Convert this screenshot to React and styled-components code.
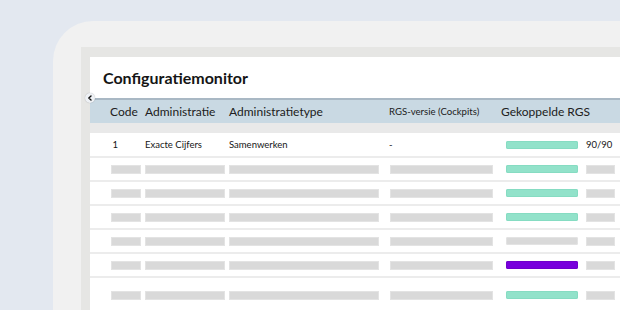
import React from "react";
import styled, { createGlobalStyle } from "styled-components";

const GlobalStyle = createGlobalStyle`
    html, body {
        margin: 0;
        padding: 0;
        width: 620px;
        height: 310px;
        overflow: hidden;
        background: #e3e8f0;
        font-family: Lato, "Noto Sans", sans-serif;
        color: #1d1d1d;
    }
`;

// outer device frame with the rounded corner
const Frame = styled.div`
    margin: 21px 0 0 53px;
    height: 289px;
    background: #f1f1f1;
    border-top-left-radius: 40px;
    padding: 26px 0 0 28px;
    box-sizing: border-box;
`;

const Panel = styled.div`
    height: 100%;
    background: #e6e6e4;
    padding: 10px 0 0 9px;
    box-sizing: border-box;
`;

const Card = styled.div`
    position: relative;
    height: 100%;
    background: #e9e9e9;
    display: flex;
    flex-direction: column;
`;

const TitleBar = styled.div`
    flex-shrink: 0;
    height: 41px;
    background: #fff;
    display: flex;
    align-items: center;
    padding-left: 13px;
`;

const Title = styled.h1`
    margin: 0;
    font-size: 16px;
    font-weight: 700;
    color: #151515;
`;

// little collapse button sitting over the table's top-left corner
const Collapse = styled.div`
    position: absolute;
    left: -5px;
    top: 36px;
    width: 10px;
    height: 10px;
    border-radius: 50%;
    background: #eef1f5;
    box-shadow: 0 0 1px rgba(0, 0, 0, 0.3);
    display: flex;
    align-items: center;
    justify-content: center;
`;

const Row = styled.div`
    display: grid;
    grid-template-columns: 35px 84px 160px 112px 85px 1fr;
    align-items: center;
    padding-left: 20px;
    height: ${(p) => p.height || 22}px;
    background: #fff;
    border-bottom: 2px solid #ececec;
    flex-shrink: 0;
`;

const HeadRow = styled(Row)`
    height: 23px;
    background: #c9d9e3;
    border-top: 2px solid #a9b8c4;
    border-bottom: none;
    margin-bottom: 10px;
`;

const HeadCell = styled.div`
    font-size: ${(p) => (p.small ? 9.6 : 12)}px;
    color: #202020;
    white-space: nowrap;
`;

const Cell = styled.div`
    font-size: 9.5px;
    color: #161616;
    white-space: nowrap;
`;

const Skeleton = styled.div`
    width: ${(p) => p.w}px;
    height: 7px;
    margin-left: ${(p) => p.offset || 0}px;
    background: #d9d9d9;
    border: 1px solid #e3e3e3;
    box-sizing: content-box;
`;

const Progress = styled.div`
    width: 72px;
    height: 8px;
    margin-left: 5px;
    border-radius: 2px;
    background: ${(p) => p.color};
    box-shadow: inset 0 0 0 1px ${(p) => p.edge};
`;

const colors = {
    teal: ["#92e2ca", "#86dcc2"],
    grey: ["#d9d9d9", "#e3e3e3"],
    purple: ["#7800dc", "#7000cc"],
};

const rows = ["teal", "teal", "grey", "purple", "teal"];

const SkeletonRow = ({ bar, height }) => (
    <Row height={height}>
        <Skeleton w={28} offset={1} />
        <Skeleton w={78} />
        <Skeleton w={148} />
        <Skeleton w={101} offset={1} />
        <Progress color={colors[bar][0]} edge={colors[bar][1]} />
        <Skeleton w={27} />
    </Row>
);

export default function App() {
    return (
        <>
            <GlobalStyle />
            <Frame>
                <Panel>
                    <Card>
                        <TitleBar>
                            <Title>Configuratiemonitor</Title>
                        </TitleBar>
                        <Collapse>
                            <svg width="6" height="6" viewBox="0 0 6 6">
                                <path d="M4 1 L1.8 3 L4 5" fill="none" stroke="#111" strokeWidth="1.4" strokeLinecap="round" strokeLinejoin="round" />
                            </svg>
                        </Collapse>
                        <HeadRow>
                            <HeadCell>Code</HeadCell>
                            <HeadCell>Administratie</HeadCell>
                            <HeadCell>Administratietype</HeadCell>
                            <HeadCell small>RGS-versie (Cockpits)</HeadCell>
                            <HeadCell>Gekoppelde RGS</HeadCell>
                            <HeadCell />
                        </HeadRow>
                        <Row height={23}>
                            <Cell>&nbsp;1</Cell>
                            <Cell>Exacte Cijfers</Cell>
                            <Cell>Samenwerken</Cell>
                            <Cell>-</Cell>
                            <Progress color={colors.teal[0]} edge={colors.teal[1]} />
                            <Cell>90/90</Cell>
                        </Row>
                        <SkeletonRow bar="teal" />
                        {rows.map((c, i) => (
                            <SkeletonRow key={i} bar={c} height={i === rows.length - 1 ? 34 : 22} />
                        ))}
                    </Card>
                </Panel>
            </Frame>
        </>
    );
}
